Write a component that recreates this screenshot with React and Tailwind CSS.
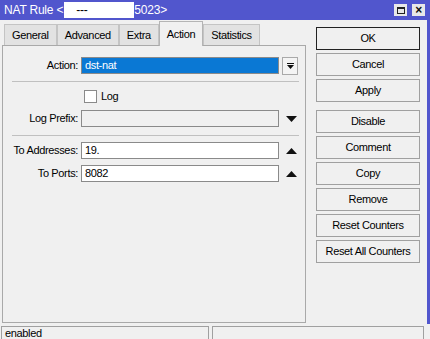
import React from "react";

const font = { fontFamily: '"Liberation Sans", Arial, sans-serif' };

function WinButton({ children, primary, className = "" }) {
  return (
    <button
      className={`w-[104px] h-[23px] flex items-center justify-center bg-[#f0f0f0] text-[11px] tracking-[-0.35px] text-black ${
        primary ? "border border-[#222]" : "border border-[#a0a0a0]"
      } ${className}`}
    >
      {children}
    </button>
  );
}

function Field({ label, value, tone = "white", trailing }) {
  return (
    <div className="flex items-center h-[17px]">
      <span className="w-[76px] text-right pr-[3px]">{label}</span>
      <div
        className={`w-[198px] h-[17px] flex items-center px-[3px] border border-[#8a8a8a] ${
          tone === "white" ? "bg-white text-black" : "bg-[#f0f0f0]"
        }`}
      >
        {value}
      </div>
      <div className="w-[18px] ml-[3px] flex justify-center">{trailing}</div>
    </div>
  );
}

const DownArrow = () => (
  <svg width="11" height="6" viewBox="0 0 11 6">
    <path d="M0 0h11L5.5 6z" fill="#111" />
  </svg>
);

const UpArrow = () => (
  <svg width="11" height="6" viewBox="0 0 11 6">
    <path d="M0 6h11L5.5 0z" fill="#111" />
  </svg>
);

export default function App() {
  const tabs = ["General", "Advanced", "Extra", "Action", "Statistics"];

  return (
    <div
      className="w-[430px] h-[339px] bg-[#f0f0f0] overflow-hidden flex flex-col text-[11px] tracking-[-0.35px] text-black"
      style={font}
    >
      {/* title bar */}
      <div className="h-[20px] bg-[#5156cd] flex items-center pl-[4px] pr-[5px] shrink-0">
        <span className="text-white text-[12px] tracking-[-0.2px] flex items-center whitespace-nowrap">
          NAT Rule &lt;
          <span className="bg-white text-black w-[70px] h-[16px] flex items-center pl-[12px] ml-[1px]">---</span>
          5023&gt;
        </span>
        <div className="ml-auto flex gap-[5px]">
          <div className="w-[13px] h-[12px] bg-[#e8e8e8] flex items-center justify-center">
            <div className="w-[8px] h-[7px] border border-[#222] border-t-2" />
          </div>
          <div className="w-[13px] h-[12px] bg-[#e8e8e8] flex items-center justify-center text-[12px] font-bold leading-none text-[#111]">
            ×
          </div>
        </div>
      </div>

      <div className="flex flex-1 min-h-0 border-r-[3px] border-[#5156cd]">
        {/* left: tabs + panel */}
        <div className="flex flex-col w-[304px] ml-[2px]">
          <div className="flex items-end h-[25px] pl-[2px]">
            {tabs.map((t) =>
              t === "Action" ? (
                <div
                  key={t}
                  className="h-[25px] px-[7px] flex items-center bg-[#f0f0f0] border border-b-0 border-[#b4b4b4] -mb-px relative z-10"
                >
                  {t}
                </div>
              ) : (
                <div
                  key={t}
                  className="h-[21px] px-[7px] flex items-center bg-[#e2e2e2] border border-b-0 border-[#c4c4c4]"
                >
                  {t}
                </div>
              )
            )}
          </div>
          <div className="h-[278px] border border-[#a9a9a9] bg-[#f0f0f0] pt-[11px] pl-[2px]">
            <div className="flex items-center h-[17px]">
              <span className="w-[76px] text-right pr-[3px]">Action:</span>
              <div className="w-[198px] h-[17px] border border-[#8a8a8a] bg-[#0a78d4] flex items-center px-[3px] text-white">
                dst-nat
              </div>
              <div className="w-[16px] h-[18px] ml-[3px] border border-[#a9a9a9] bg-[#f4f4f4] flex flex-col items-center justify-center gap-[1px]">
                <div className="w-[7px] h-[1px] bg-[#111]" />
                <svg width="7" height="4" viewBox="0 0 7 4">
                  <path d="M0 0h7L3.5 4z" fill="#111" />
                </svg>
              </div>
            </div>
            <div className="h-px bg-[#c0c0c0] ml-[7px] mr-[6px] mt-[7px]" />
            <div className="flex items-center h-[13px] mt-[8px] pl-[79px]">
              <div className="w-[13px] h-[13px] border border-[#8a8a8a] bg-white" />
              <span className="ml-[4px]">Log</span>
            </div>
            <div className="mt-[7px]">
              <Field label="Log Prefix:" value="" tone="gray" trailing={<DownArrow />} />
            </div>
            <div className="h-px bg-[#c0c0c0] ml-[7px] mr-[6px] mt-[8px]" />
            <div className="mt-[6px]">
              <Field label="To Addresses:" value="19." trailing={<UpArrow />} />
            </div>
            <div className="mt-[6px]">
              <Field label="To Ports:" value="8082" trailing={<UpArrow />} />
            </div>
          </div>
        </div>

        {/* right: buttons */}
        <div className="flex flex-col ml-[10px] pt-[7px] gap-[3px]">
          <WinButton primary>OK</WinButton>
          <WinButton>Cancel</WinButton>
          <WinButton>Apply</WinButton>
          <WinButton className="mt-[5px]">Disable</WinButton>
          <WinButton>Comment</WinButton>
          <WinButton>Copy</WinButton>
          <WinButton>Remove</WinButton>
          <WinButton>Reset Counters</WinButton>
          <WinButton>Reset All Counters</WinButton>
        </div>
      </div>

      {/* status bar */}
      <div className="h-[15px] flex gap-[3px] pt-[2px] px-[1px] shrink-0">
        <div className="w-[208px] border border-b-0 border-[#a0a0a0] pl-[3px] leading-[13px]">enabled</div>
        <div className="w-[212px] border border-b-0 border-[#a0a0a0]" />
      </div>
    </div>
  );
}
